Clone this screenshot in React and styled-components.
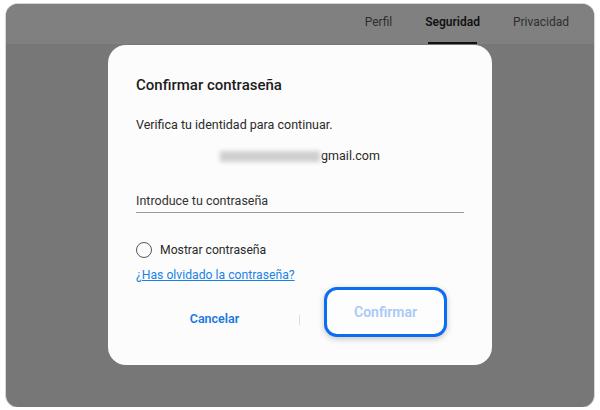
import React from 'react';
import styled, { createGlobalStyle } from 'styled-components';

const GlobalStyle = createGlobalStyle`
  body {
    margin: 0;
    background: #ffffff;
    font-family: Roboto, "Noto Sans", sans-serif;
  }
`;

const Frame = styled.div`
  margin: 4px 6px 0;
  width: 588px;
  height: 403px;
  border-radius: 12px;
  overflow: hidden;
  box-sizing: border-box;
  box-shadow: 0 0 0 1px #d6d6d6;
  display: flex;
  flex-direction: column;
  background: #777777;
`;

const Header = styled.div`
  height: 40px;
  flex-shrink: 0;
  background: #808080;
  display: flex;
  justify-content: flex-end;
  align-items: stretch;
  gap: 33px;
  padding-right: 25px;
`;

const Tab = styled.div`
  position: relative;
  display: flex;
  align-items: center;
  padding-bottom: 5px;
  font-size: 12px;
  color: ${props => (props.active ? '#111111' : '#2e2e2e')};
  font-weight: ${props => (props.active ? 600 : 400)};

  &::after {
    content: '';
    display: ${props => (props.active ? 'block' : 'none')};
    position: absolute;
    left: 3px;
    right: 3px;
    bottom: 0;
    height: 2px;
    background: #111111;
  }
`;

const Body = styled.div`
  flex: 1;
  display: flex;
  justify-content: center;
  align-items: flex-start;
  padding-top: 1px;
`;

const Modal = styled.div`
  width: 384px;
  box-sizing: border-box;
  background: #fcfcfc;
  border-radius: 18px;
  padding: 30px 28px 28px;
  display: flex;
  flex-direction: column;
  color: #222222;
`;

const Title = styled.h2`
  margin: 0;
  font-size: 15px;
  line-height: 20px;
  font-weight: 500;
  color: #1c1c1c;
`;

const Text = styled.p`
  margin: ${props => props.mt || 0}px 0 0;
  font-size: 12.5px;
  line-height: 18px;
  color: #2a2a2a;
`;

const Email = styled.div`
  margin-top: 13px;
  display: flex;
  justify-content: center;
  align-items: center;
  font-size: 12.5px;
  line-height: 18px;
  color: #2a2a2a;
`;

const Blur = styled.span`
  display: inline-block;
  width: 100px;
  height: 11px;
  margin-right: 1px;
  background: #cfcfcf;
  filter: blur(2px);
`;

const Field = styled.div`
  margin-top: 27px;
  padding-bottom: 2px;
  border-bottom: 1px solid #9a9a9a;
  font-size: 12.5px;
  line-height: 18px;
  color: #333333;
`;

const CheckRow = styled.label`
  margin-top: 27px;
  height: 20px;
  display: flex;
  align-items: center;
  gap: 8px;
  font-size: 12.2px;
  color: #2a2a2a;
`;

const Radio = styled.span`
  width: 16px;
  height: 16px;
  box-sizing: border-box;
  border-radius: 50%;
  border: 1.5px solid #555555;
`;

const Link = styled.a`
  margin-top: 6px;
  font-size: 12.2px;
  line-height: 18px;
  color: #1a82e6;
  text-decoration: underline;
  align-self: flex-start;
`;

const Actions = styled.div`
  margin-top: 3px;
  display: flex;
  align-items: flex-start;
`;

const Half = styled.div`
  flex: 1;
  display: flex;
  justify-content: center;
  padding: ${props => (props.side === 'left' ? '0 6px 0 0' : '0 0 0 7px')};
`;

const TextButton = styled.button`
  margin-top: 23px;
  border: none;
  background: none;
  padding: 0;
  font-family: inherit;
  font-size: 12.5px;
  line-height: 18px;
  font-weight: 600;
  color: #1a78e0;
`;

const Divider = styled.span`
  margin-top: 28px;
  width: 1px;
  height: 10px;
  background: #dddddd;
`;

const PrimaryButton = styled.button`
  width: 123px;
  height: 50px;
  box-sizing: border-box;
  border: 3px solid #0b6ef0;
  border-radius: 13px;
  background: #fdfdfd;
  box-shadow: 0 2px 6px rgba(0, 0, 0, 0.22);
  font-family: inherit;
  font-size: 14px;
  font-weight: 600;
  color: #a9c9f7;
`;

const tabs = ['Perfil', 'Seguridad', 'Privacidad'];

const App = () => (
  <>
    <GlobalStyle />
    <Frame>
      <Header>
        {tabs.map(t => (
          <Tab key={t} active={t === 'Seguridad'}>
            {t}
          </Tab>
        ))}
      </Header>
      <Body>
        <Modal>
          <Title>Confirmar contraseña</Title>
          <Text mt={21}>Verifica tu identidad para continuar.</Text>
          <Email>
            <Blur />
            gmail.com
          </Email>
          <Field>Introduce tu contraseña</Field>
          <CheckRow>
            <Radio />
            Mostrar contraseña
          </CheckRow>
          <Link href="#">¿Has olvidado la contraseña?</Link>
          <Actions>
            <Half side="left">
              <TextButton>Cancelar</TextButton>
            </Half>
            <Divider />
            <Half side="right">
              <PrimaryButton>Confirmar</PrimaryButton>
            </Half>
          </Actions>
        </Modal>
      </Body>
    </Frame>
  </>
);

export default App;
